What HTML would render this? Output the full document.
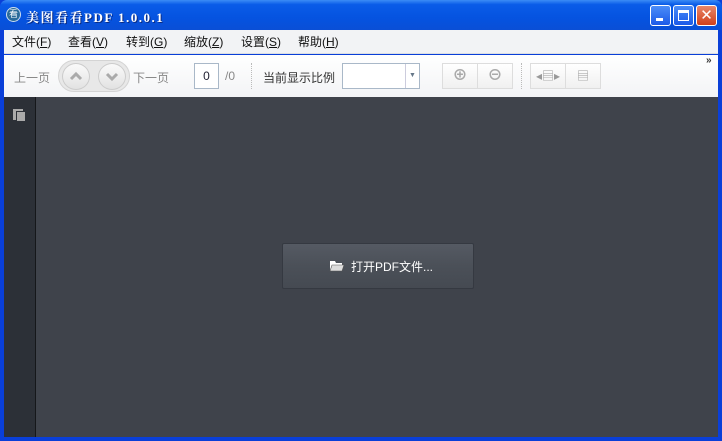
<!DOCTYPE html>
<html><head><meta charset="utf-8"><style>
*{margin:0;padding:0;box-sizing:border-box}
body{width:722px;height:441px;overflow:hidden;background:#0a3fd8;font-family:"Liberation Sans","Noto Sans CJK SC",sans-serif;font-size:12px;position:relative}
.title{position:absolute;left:0;top:0;width:722px;height:30px;background:linear-gradient(#3b8cf5 0,#0a5ce8 15%,#0553e0 60%,#0a4fd6 100%);border-radius:7px 7px 0 0}
.title .t{position:absolute;left:26px;top:7px;color:#fff;font-weight:bold;font-size:13px;font-family:"Liberation Serif","Noto Serif CJK SC",serif;letter-spacing:1.5px;text-shadow:1px 1px #0a2a80}
.ico{position:absolute;left:6px;top:7px;width:15px;height:15px;border-radius:50%;background:#2a6b9a;border:1px solid #cde;color:#fff;font-size:9px;text-align:center;line-height:13px}
.wb{position:absolute;top:5px;width:21px;height:21px;border:1px solid #fff;border-radius:3px;background:linear-gradient(#4b8df8,#1c5ae8)}
.menu{position:absolute;left:4px;top:30px;width:714px;height:24px;background:#f2f3f5;border-bottom:1px solid #dcdfe3}
.menu span{position:absolute;top:3px;color:#111;font-size:12px}
.tb{position:absolute;left:4px;top:55px;width:714px;height:42px;background:linear-gradient(#ffffff,#f3f4f6)}
.g{position:absolute;color:#888;font-size:12px}
.main{position:absolute;left:4px;top:97px;width:714px;height:340px;background:#3f434b}
.side{position:absolute;left:0;top:0;width:32px;height:340px;background:#2c3037;border-right:1px solid #15171a}
.btn{position:absolute;left:278px;top:146px;width:192px;height:46px;border:1px solid #353941;border-radius:2px;background:linear-gradient(#555a63,#4b5058 50%,#454a52);color:#fff;font-size:12px}
.sq{position:absolute;border:1px solid #ddd;background:linear-gradient(#fff,#f0f0f0);height:26px}
</style></head><body>
<div class="title"><div class="ico">看</div><div class="t">美图看看PDF 1.0.0.1</div>
<div class="wb" style="left:650px"><div style="position:absolute;left:5px;top:12px;width:7px;height:3px;background:#fff"></div></div>
<div class="wb" style="left:673px"><div style="position:absolute;left:4px;top:4px;width:11px;height:11px;border:1px solid #fff;border-top-width:3px"></div></div>
<div class="wb" style="left:696px;background:linear-gradient(#e8876a,#d1401b);color:#fff;font-size:15px;text-align:center;line-height:19px">✕</div>
</div>
<div class="menu">
<span style="left:8px">文件(<u>F</u>)</span><span style="left:64px">查看(<u>V</u>)</span><span style="left:122px">转到(<u>G</u>)</span><span style="left:180px">缩放(<u>Z</u>)</span><span style="left:237px">设置(<u>S</u>)</span><span style="left:294px">帮助(<u>H</u>)</span>
</div>
<div class="tb">
<span class="g" style="left:10px;top:14px">上一页</span>
<div style="position:absolute;left:54px;top:5px;width:72px;height:32px;border-radius:16px;background:#e8e8e8;border:1px solid #d4d4d4"></div>
<div style="position:absolute;left:58px;top:8px;width:28px;height:27px;border-radius:50%;background:linear-gradient(#fafafa,#e2e2e2);border:1px solid #ccc"><svg width="26" height="25" style="position:absolute;left:0;top:0"><path d="M8 15 L13 10 L18 15" stroke="#aaa" stroke-width="3" fill="none"/></svg></div>
<div style="position:absolute;left:94px;top:8px;width:28px;height:27px;border-radius:50%;background:linear-gradient(#fafafa,#e2e2e2);border:1px solid #ccc"><svg width="26" height="25" style="position:absolute;left:0;top:0"><path d="M8 10 L13 15 L18 10" stroke="#aaa" stroke-width="3" fill="none"/></svg></div>
<span class="g" style="left:129px;top:14px">下一页</span>
<div style="position:absolute;left:190px;top:8px;width:25px;height:26px;border:1px solid #a9b8c8;background:#fff;text-align:center;line-height:24px;color:#223">0</div>
<span class="g" style="left:221px;top:14px">/0</span>
<div style="position:absolute;left:247px;top:8px;height:26px;border-left:1px dotted #bbb"></div>
<span style="position:absolute;left:259px;top:14px;color:#333">当前显示比例</span>
<div style="position:absolute;left:338px;top:8px;width:78px;height:26px;border:1px solid #a9b8c8;background:#fff"><div style="position:absolute;right:0;top:0;width:14px;height:24px;border-left:1px solid #ccd;color:#678;font-size:7px;text-align:center;line-height:24px">▼</div></div>
<div class="sq" style="left:438px;top:8px;width:36px;color:#aaa;text-align:center;line-height:24px;font-size:15px;font-weight:bold">⊕</div>
<div class="sq" style="left:473px;top:8px;width:36px;color:#aaa;text-align:center;line-height:24px;font-size:15px;font-weight:bold">⊖</div>
<div style="position:absolute;left:517px;top:8px;height:26px;border-left:1px dotted #bbb"></div>
<div class="sq" style="left:526px;top:8px;width:36px;color:#999;text-align:center;line-height:24px">◂▤▸</div>
<div class="sq" style="left:561px;top:8px;width:36px;color:#999;text-align:center;line-height:24px">▤</div>
<span style="position:absolute;left:702px;top:0px;color:#333;font-size:10px;font-weight:bold">»</span>
</div>
<div class="main"><div class="side"><div style="position:absolute;left:9px;top:12px;width:10px;height:11px;background:#aaa"></div><div style="position:absolute;left:12px;top:14px;width:10px;height:11px;background:#aaa;border:1px solid #2c3037"></div></div>
<div class="btn"><svg width="16" height="14" style="position:absolute;left:46px;top:14px"><path d="M1 3 H6 L7 5 H13 V13 H1 Z" fill="#fff"/><path d="M3 7 H15 L13 13 H1 Z" fill="#ddd" stroke="#555" stroke-width="0.6"/></svg><span style="position:absolute;left:68px;top:14px">打开PDF文件...</span></div>
</div>
</body></html>
